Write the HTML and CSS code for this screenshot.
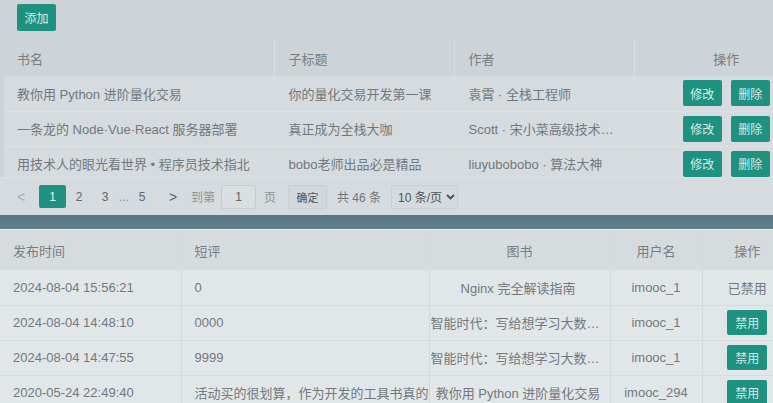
FILE: index.html
```html
<!DOCTYPE html>
<html lang="zh">
<head>
<meta charset="utf-8">
<link rel="stylesheet" href="styles.css">
</head>
<body>
<div class="top">
  <div class="toolbar"><button class="btn add">添加</button></div>
  <div class="table-clip">
    <table class="books">
      <colgroup><col class="c1"><col class="c2"><col class="c3"><col class="c4"></colgroup>
      <thead>
        <tr><th>书名</th><th>子标题</th><th>作者</th><th class="center">操作</th></tr>
      </thead>
      <tbody>
        <tr><td>教你用 Python 进阶量化交易</td><td>你的量化交易开发第一课</td><td>袁霄 · 全栈工程师</td><td class="center"><span class="ops"><button class="btn sm">修改</button><button class="btn sm">删除</button></span></td></tr>
        <tr><td>一条龙的 Node·Vue·React 服务器部署</td><td>真正成为全栈大咖</td><td class="ell">Scott · 宋小菜高级技术经理</td><td class="center"><span class="ops"><button class="btn sm">修改</button><button class="btn sm">删除</button></span></td></tr>
        <tr><td>用技术人的眼光看世界 • 程序员技术指北</td><td>bobo老师出品必是精品</td><td>liuyubobobo · 算法大神</td><td class="center"><span class="ops"><button class="btn sm">修改</button><button class="btn sm">删除</button></span></td></tr>
      </tbody>
    </table>
  </div>
  <div class="pager">
    <span class="pg prev">&lt;</span>
    <span class="pg active">1</span>
    <span class="pg">2</span>
    <span class="pg">3</span>
    <span class="pg dots">...</span>
    <span class="pg five">5</span>
    <span class="pg next">&gt;</span>
    <span class="lbl goto">到第</span>
    <span class="inp">1</span>
    <span class="lbl page">页</span>
    <span class="ok">确定</span>
    <span class="lbl total">共 46 条</span>
    <span class="sel">10 条/页 <svg class="chev" width="9" height="6" viewBox="0 0 9 6"><path d="M1 1 L4.5 4.5 L8 1" fill="none" stroke="#4a4f53" stroke-width="1.8"/></svg></span>
  </div>
</div>
<div class="band"></div>
<div class="bottom">
  <table class="comments">
    <colgroup><col class="d1"><col class="d2"><col class="d3"><col class="d4"><col class="d5"></colgroup>
    <thead>
      <tr><th>发布时间</th><th>短评</th><th class="center">图书</th><th class="center">用户名</th><th class="center">操作</th></tr>
    </thead>
    <tbody>
      <tr><td>2024-08-04 15:56:21</td><td>0</td><td class="book">Nginx 完全解读指南</td><td class="center">imooc_1</td><td class="center">已禁用</td></tr>
      <tr><td>2024-08-04 14:48:10</td><td>0000</td><td class="book ell">智能时代：写给想学习大数据的所有人</td><td class="center">imooc_1</td><td class="center"><button class="btn ban">禁用</button></td></tr>
      <tr><td>2024-08-04 14:47:55</td><td>9999</td><td class="book ell">智能时代：写给想学习大数据的所有人</td><td class="center">imooc_1</td><td class="center"><button class="btn ban">禁用</button></td></tr>
      <tr><td>2020-05-24 22:49:40</td><td class="clip">活动买的很划算，作为开发的工具书真的很好用</td><td class="book">教你用 Python 进阶量化交易</td><td class="center">imooc_294</td><td class="center"><button class="btn ban">禁用</button></td></tr>
    </tbody>
  </table>
</div>
</body>
</html>
```

FILE: styles.css
```css
* { box-sizing: border-box; }
html, body {
  margin: 0;
  padding: 0;
  width: 773px;
  height: 403px;
  overflow: hidden;
}
body {
  font-family: "Liberation Sans", "Noto Sans CJK SC", sans-serif;
  font-size: 13px;
  color: #73797d;
  background: #e0e5e8;
}
.top {
  background: #cdd3d6;
  width: 773px;
}
.toolbar {
  height: 40px;
  padding: 4px 0 0 17px;
}
.btn {
  border: none;
  border-radius: 2px;
  background: #1f9181;
  color: #d5ece7;
  font-family: inherit;
  font-size: 12px;
  padding: 0;
  cursor: pointer;
}
.add { width: 39px; height: 27px; }
.table-clip {
  height: 137px;
  overflow: hidden;
  padding-left: 4px;
  width: 773px;
}
table {
  border-collapse: collapse;
  table-layout: fixed;
}
.books { width: 814px; }
.c1 { width: 270px; }
.c2 { width: 180px; }
.c3 { width: 180px; }
.c4 { width: 184px; }
.books th, .books td {
  text-align: left;
  font-weight: normal;
  white-space: nowrap;
  overflow: hidden;
  padding: 0 0 0 13px;
  border-left: 1px solid #d9dee1;
}
.books th:first-child, .books td:first-child { border-left: none; }
.books th {
  height: 36px;
  color: #787d81;
  background: #cdd3d6;
}
.books td {
  height: 35px;
  background: #d5dbde;
  border-bottom: 1px solid #dde2e5;
}
.books td:nth-child(2), .books th:nth-child(2) { padding-left: 14px; }
.books td:nth-child(3), .books th:nth-child(3) { padding-left: 14px; }
.books .center, .comments .center { text-align: center; padding-left: 0; }
.ell { text-overflow: ellipsis; padding-right: 12px !important; }
.ops { display: inline-flex; gap: 9px; vertical-align: middle; }
.sm { width: 39px; height: 26px; }
.pager {
  height: 38px;
  background: #d5dbde;
  border-top: 1px solid #dbe0e3;
  display: flex;
  align-items: center;
  font-size: 12px;
  color: #5f6569;
  white-space: nowrap;
}
.pg {
  height: 23px;
  width: 26px;
  display: flex;
  align-items: center;
  justify-content: center;
  border-radius: 2px;
}
.prev { margin-left: 8px; color: #a9afb3; font-size: 14px; }
.active { margin-left: 5px; width: 27px; background: #1f9181; color: #e6f4f1; }
.dots { width: 12px; color: #8a9094; }
.five { width: 24px; }
.next { margin-left: 6px; color: #5f6569; font-size: 14px; }
.lbl { color: #8d9397; }
.goto { margin-left: 5px; }
.inp {
  margin-left: 6px;
  width: 35px;
  height: 24px;
  border: 1px solid #c6ccd0;
  background: #d9dee1;
  border-radius: 2px;
  display: flex;
  align-items: center;
  justify-content: center;
}
.page { margin-left: 8px; }
.ok {
  margin-left: 12px;
  width: 39px;
  height: 24px;
  border: 1px solid #c9cfd2;
  background: #d2d8db;
  border-radius: 2px;
  display: flex;
  align-items: center;
  justify-content: center;
  color: #4f5458;
  font-size: 11px;
}
.total { margin-left: 10px; color: #6f757a; }
.sel {
  margin-left: 10px;
  width: 67px;
  height: 24px;
  border: 1px solid #c9cfd2;
  background: #d4dadd;
  border-radius: 2px;
  display: flex;
  align-items: center;
  padding-left: 6px;
  gap: 4px;
  color: #4f5458;
  white-space: nowrap;
}
.chev { flex: none; }
.band {
  height: 14px;
  background: linear-gradient(#5a7586, #627d8c);
}
.bottom {
  background: #e0e5e8;
  border-top: 1px solid #e7ecee;
}
.comments { width: 792px; }
.d1 { width: 181px; }
.d2 { width: 248px; }
.d3 { width: 181px; }
.d4 { width: 92px; }
.d5 { width: 90px; }
.comments th, .comments td {
  text-align: left;
  font-weight: normal;
  white-space: nowrap;
  overflow: hidden;
  padding: 0 0 0 13px;
  border-left: 1px solid #d4d9dc;
}
.comments th:first-child, .comments td:first-child { border-left: none; }
.comments th {
  height: 40px;
  background: #d6dbde;
  color: #787d81;
}
.comments td {
  height: 35px;
  background: #e1e6e9;
  border-bottom: 1px solid #d6dbde;
}
.comments .book { text-align: center; padding: 0 4px 0 1px; }
.comments .book.ell { padding-right: 4px !important; }
.clip { text-overflow: clip; }
.ban { width: 40px; height: 25px; vertical-align: middle; }
```
